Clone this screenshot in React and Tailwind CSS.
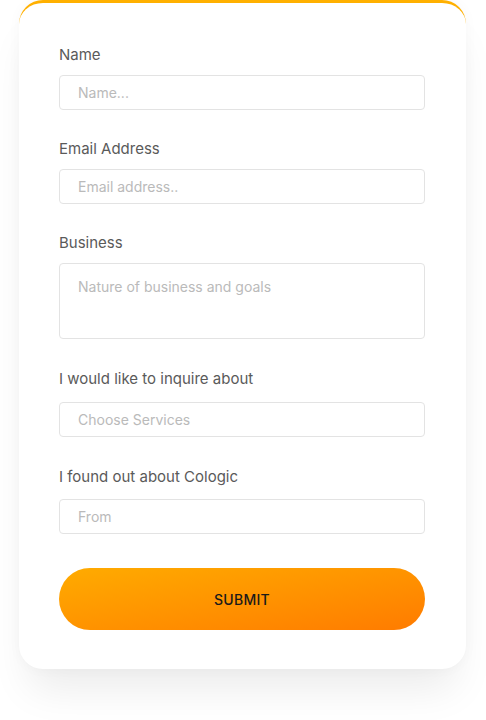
import React from 'react'

const font = { fontFamily: 'Inter, "Noto Sans", sans-serif' }

const Field = ({ label, placeholder, className = '', gap = 'mt-[9px]' }) => (
  <div className={className}>
    <label className="block text-[15px] leading-[22px] text-[#5a5a5a]">{label}</label>
    <input
      type="text"
      placeholder={placeholder}
      className={`${gap} block w-full h-[35px] rounded-[4px] border border-[#e3e3e3] bg-white px-[18px] text-[14px] text-[#555] placeholder:text-[#bababa] outline-none`}
    />
  </div>
)

export default function App() {
  return (
    <div className="min-h-screen bg-white" style={font}>
      <div className="pl-[19px] pr-[20px]">
        <div className="bg-white rounded-[24px] border-t-[3px] border-[#ffb000] shadow-[0_30px_40px_-10px_rgba(0,0,0,0.08),0_0_14px_rgba(0,0,0,0.03)] pt-[41px] pb-[39px] pl-10 pr-[41px]">
          <Field label="Name" placeholder="Name..." />
          <Field label="Email Address" placeholder="Email address.." className="mt-[28px]" />
          <div className="mt-[28px]">
            <label className="block text-[15px] leading-[22px] text-[#5a5a5a]">Business</label>
            <textarea
              placeholder="Nature of business and goals"
              className="mt-[9px] block w-full h-[76px] resize-none rounded-[4px] border border-[#e3e3e3] bg-white px-[18px] pt-[13px] text-[14px] leading-[20px] text-[#555] placeholder:text-[#bababa] outline-none"
            />
          </div>
          <Field
            label="I would like to inquire about"
            placeholder="Choose Services"
            className="mt-[29px]"
            gap="mt-[12px]"
          />
          <Field
            label="I found out about Cologic"
            placeholder="From"
            className="mt-[29px]"
            gap="mt-[11px]"
          />
          <button className="mt-[34px] w-full h-[62px] rounded-full bg-gradient-to-br from-[#ffab00] to-[#ff7b00] text-[14px] font-medium tracking-[0.02em] text-[#1a1a1a]">
            SUBMIT
          </button>
        </div>
      </div>
    </div>
  )
}
